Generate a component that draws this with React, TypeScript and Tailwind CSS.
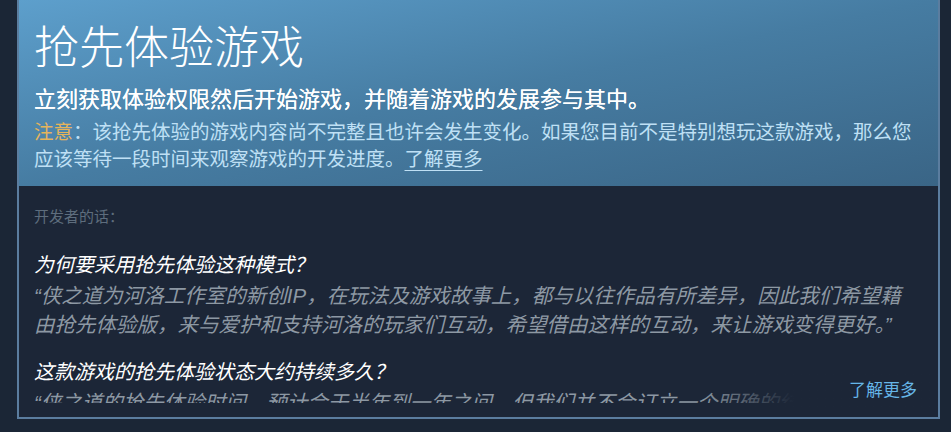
const FONT = '"Liberation Sans", "Noto Sans CJK SC", sans-serif';

export default function App() {
  return (
    <div
      className="w-[951px] h-[432px] overflow-hidden bg-[#1b2636] pl-[17px]"
      style={{ fontFamily: FONT }}
    >
      <div className="w-[923px] border-x-2 border-b-2 border-[#5b7d9f]">
        {/* header */}
        <div className="h-[186px] bg-gradient-to-br from-[#5d9fcc] via-[#467ca2] to-[#3a6586] px-[15px] pt-[26px]">
          <h1 className="text-[45px] leading-[45px] font-light text-white">抢先体验游戏</h1>
          <p className="mt-[18px] text-[22px] leading-[22px] font-normal text-white [text-shadow:0_0_0.4px_#fff]">
            立刻获取体验权限然后开始游戏，并随着游戏的发展参与其中。
          </p>
          <p className="mt-[8px] text-[19.5px] leading-[27px] text-[#bfe0f5]">
            <span className="text-[#e5b45c]">注意</span>：该抢先体验的游戏内容尚不完整且也许会发生变化。如果您目前不是特别想玩这款游戏，那么您
            <br />
            应该等待一段时间来观察游戏的开发进度。
            <a className="underline underline-offset-4">了解更多</a>
          </p>
        </div>

        {/* developer notes */}
        <div className="relative bg-[#1c2637] pb-[14px]">
          <div className="h-[217px] overflow-hidden px-[15px] pt-[21px]">
            <p className="text-[15px] leading-[20px] text-[#5e6d7d]">开发者的话：</p>
            <p className="mt-[24px] text-[20px] leading-[28px] italic text-white">
              为何要采用抢先体验这种模式？
            </p>
            <p className="mt-[2px] text-[20.5px] leading-[29px] italic text-[#8d98a3] whitespace-nowrap">
              “侠之道为河洛工作室的新创IP，在玩法及游戏故事上，都与以往作品有所差异，因此我们希望藉
              <br />
              由抢先体验版，来与爱护和支持河洛的玩家们互动，希望借由这样的互动，来让游戏变得更好。”
            </p>
            <p className="mt-[19px] text-[20px] leading-[28px] italic text-white">
              这款游戏的抢先体验状态大约持续多久？
            </p>
            <p className="mt-[2px] text-[20.5px] leading-[29px] italic text-[#8d98a3] whitespace-nowrap">
              “侠之道的抢先体验时间，预计会于半年到一年之间，但我们并不会订立一个明确的结束时间，
            </p>
          </div>
          <div className="absolute right-0 top-[186px] h-[40px] w-[240px] bg-gradient-to-r from-transparent via-[#1c2637] via-40% to-[#1c2637]" />
          <a className="absolute right-[21px] top-[195px] text-[17px] leading-[20px] text-[#66b6e8]">
            了解更多
          </a>
        </div>
      </div>
    </div>
  );
}
